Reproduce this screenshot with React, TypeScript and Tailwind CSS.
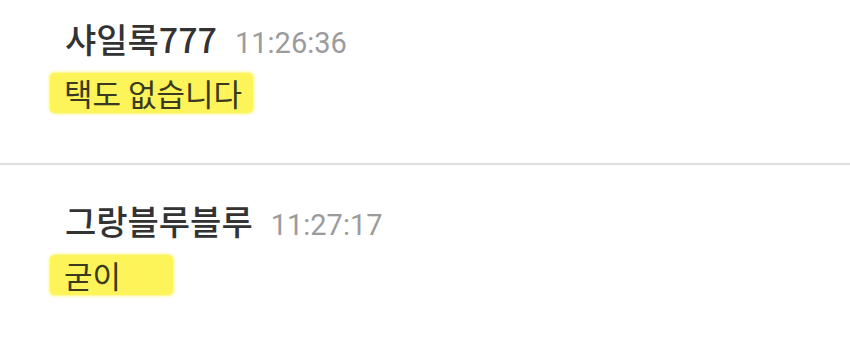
import React from "react";

const KR = { fontFamily: '"Noto Sans CJK KR", "Noto Sans", sans-serif' };

function Message({ name, time, text, hlWidth }: { name: string; time: string; text: string; hlWidth: string }) {
  return (
    <div className="flex flex-col">
      <div className="flex items-baseline gap-[18px] pl-[65px] h-[40px] leading-[40px]">
        <span className="text-[34px] font-medium text-[#333333]" style={KR}>{name}</span>
        <span className="text-[29px] text-[#9b9b9b] font-['Roboto',sans-serif]">{time}</span>
      </div>
      <div className="mt-[14px] pl-[50px]">
        <span
          className={`inline-block ${hlWidth} h-[40px] rounded-[5px] bg-[#fcf458] pl-[14px] text-[31px] leading-[40px] text-[#3a3a22] shadow-[0_0_3px_1px_#fcf66e]`}
          style={KR}
        >
          {text}
        </span>
      </div>
    </div>
  );
}

export default function App() {
  return (
    <div className="w-[850px] h-[342px] bg-white overflow-hidden">
      <div className="pt-[19px] pb-[50px]">
        <Message name="샤일록777" time="11:26:36" text="택도 없습니다" hlWidth="w-[203px]" />
      </div>
      <div className="h-[2px] bg-[#dedede]" />
      <div className="pt-[36px]">
        <Message name="그랑블루블루" time="11:27:17" text="굳이" hlWidth="w-[123px]" />
      </div>
    </div>
  );
}
